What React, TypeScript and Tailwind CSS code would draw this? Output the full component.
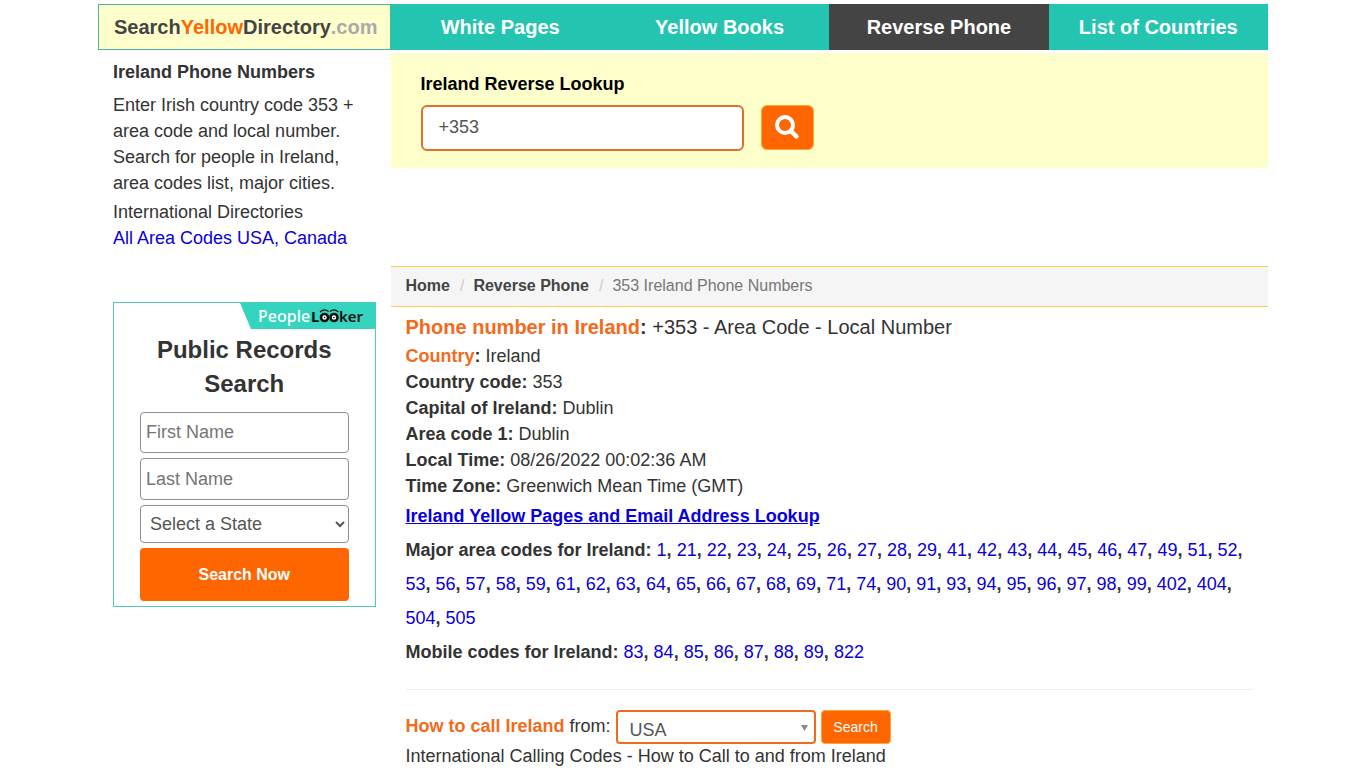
import React, { useState } from 'react';

const navItems = [
  { label: 'White Pages', active: false },
  { label: 'Yellow Books', active: false },
  { label: 'Reverse Phone', active: true },
  { label: 'List of Countries', active: false },
];

const areaCodes = [
  '1', '21', '22', '23', '24', '25', '26', '27', '28', '29', '41', '42', '43', '44', '45', '46', '47', '49',
  '51', '52', '53', '56', '57', '58', '59', '61', '62', '63', '64', '65', '66', '67', '68', '69', '71', '74',
  '90', '91', '93', '94', '95', '96', '97', '98', '99', '402', '404', '504', '505',
];

const mobileCodes = ['83', '84', '85', '86', '87', '88', '89', '822'];

const facts = [
  { label: 'Country code:', value: '353' },
  { label: 'Capital of Ireland:', value: 'Dublin' },
  { label: 'Area code 1:', value: 'Dublin' },
  { label: 'Local Time:', value: '08/26/2022 00:02:36 AM' },
  { label: 'Time Zone:', value: 'Greenwich Mean Time (GMT)' },
];

const CodeList: React.FC<{ title: string; codes: string[] }> = ({ title, codes }) => (
  <p className="leading-[34px] font-bold">
    {title}{' '}
    {codes.map((code, i) => (
      <React.Fragment key={code}>
        <a href="#" className="font-normal text-[#0a00dc]">{code}</a>
        {i < codes.length - 1 && ', '}
      </React.Fragment>
    ))}
  </p>
);

const PeopleLookerLogo = () => (
  <svg width="135" height="26" viewBox="0 0 135 26" role="img" aria-label="PeopleLooker">
    <path d="M0 0H135V26H11Z" fill="#35d4be" />
    <g fontFamily="'Noto Sans', sans-serif" fontSize="16">
      <text x="18" y="19" fill="#fff" fontWeight="500">People</text>
      <text x="71" y="19" fill="#111" fontWeight="700" fontSize="15">L</text>
      <text x="99" y="19" fill="#111" fontWeight="600" fontSize="15">ker</text>
    </g>
    <g fill="#fff" stroke="#111" strokeWidth="2.6">
      <circle cx="84.5" cy="14.5" r="3.5" />
      <circle cx="94" cy="14.5" r="3.5" />
    </g>
    <circle cx="84.5" cy="14.5" r="0.8" fill="#111" />
    <circle cx="94" cy="14.5" r="0.8" fill="#111" />
    <path d="M80 9Q84.5 5 88.5 8.5M90 8.5Q94 5 98.5 9" fill="none" stroke="#111" strokeWidth="1.2" />
  </svg>
);

const Sidebar = () => (
  <aside className="w-1/4 shrink-0 px-[15px] pt-[9px] leading-[26px]">
    <h2 className="font-bold">Ireland Phone Numbers</h2>
    <p className="mt-[7px]">
      Enter Irish country code 353 + area code and local number. Search for people in Ireland, area codes list, major cities.
    </p>
    <p className="mt-[3px]">
      International Directories
      <br />
      <a href="#" className="text-[#0a00dc]">All Area Codes USA, Canada</a>
    </p>

    <form onSubmit={(e) => e.preventDefault()} className="mt-[51px] border border-[#55c9b5] pb-[5px]">
      <div className="flex h-[26px] justify-end">
        <PeopleLookerLogo />
      </div>
      <h3 className="mt-1 text-center text-2xl leading-[34px] font-bold">
        Public Records
        <br />
        Search
      </h3>
      <div className="mt-[11px] flex flex-col gap-[5px] px-[26px]">
        <input
          type="text"
          aria-label="First Name"
          placeholder="First Name"
          className="h-[41px] w-full rounded border border-[#8f8f8f] px-[5px] placeholder-[#757575]"
        />
        <input
          type="text"
          aria-label="Last Name"
          placeholder="Last Name"
          className="h-[42px] w-full rounded border border-[#8f8f8f] px-[5px] placeholder-[#757575]"
        />
        <select aria-label="State" className="h-[38px] w-full rounded border border-[#8f8f8f] bg-white px-[5px] text-[#555]">
          <option>Select a State</option>
        </select>
        <button type="submit" className="h-[53px] w-full rounded bg-[#ff6600] text-base font-bold text-white">
          Search Now
        </button>
      </div>
    </form>
  </aside>
);

const App: React.FC = () => {
  const [phone, setPhone] = useState('+353');

  return (
    <div className="mx-auto max-w-[1170px] pt-1 font-['Liberation_Sans',Arial,sans-serif] text-lg text-[#333]">
      {/* Top bar */}
      <header className="flex h-[46px] bg-[#23c4b0] text-xl font-bold">
        <a href="#" className="flex w-1/4 shrink-0 items-center border border-[#4cb794] bg-[#ffffcc] pl-[15px] text-[#444]">
          Search<span className="text-[#ff6600]">Yellow</span>Directory<span className="text-[#aaa]">.com</span>
        </a>
        <nav className="flex flex-1">
          {navItems.map((item) => (
            <a
              key={item.label}
              href="#"
              className={`flex flex-1 items-center justify-center text-white ${item.active ? 'bg-[#444]' : ''}`}
            >
              {item.label}
            </a>
          ))}
        </nav>
      </header>

      <div className="flex">
        <Sidebar />

        <main className="min-w-0 flex-1 pt-[3px]">
          {/* Reverse lookup */}
          <form onSubmit={(e) => e.preventDefault()} className="bg-[#ffffcc] px-[30px] pt-[18px] pb-[17px]">
            <label htmlFor="phone" className="block leading-[26px] font-bold text-black">Ireland Reverse Lookup</label>
            <div className="mt-2 flex gap-[17px]">
              <input
                id="phone"
                type="text"
                value={phone}
                onChange={(e) => setPhone(e.target.value)}
                className="h-[46px] w-[323px] rounded-md border-2 border-[#e2702a] bg-white px-4 pb-[2px] text-[#555]"
              />
              <button
                type="submit"
                aria-label="Search"
                className="flex h-[45px] w-[53px] items-center justify-center rounded-md border border-[#ffa733] bg-[#ff6600]"
              >
                <svg width="26" height="26" viewBox="0 0 26 26" fill="none" stroke="#fff" aria-hidden="true">
                  <circle cx="11" cy="10" r="8" strokeWidth="4" />
                  <path d="M17 16L22.5 21.5" strokeWidth="4.5" strokeLinecap="round" />
                </svg>
              </button>
            </div>
          </form>

          {/* Breadcrumb */}
          <nav aria-label="Breadcrumb" className="mt-[98px] border-y border-[#f5cf4d] bg-[#f5f5f5] px-[15px] pt-[7px] pb-[9px]">
            <ol className="flex text-base leading-[23px]">
              <li><a href="#" className="font-bold text-[#444]">Home</a></li>
              <li className="pr-[9px] pl-[10px] text-[#ccc]">/</li>
              <li><a href="#" className="font-bold text-[#444]">Reverse Phone</a></li>
              <li className="pr-[9px] pl-[10px] text-[#ccc]">/</li>
              <li className="text-[#777]">353 Ireland Phone Numbers</li>
            </ol>
          </nav>

          {/* Country details */}
          <section className="px-[15px] pt-[7px] leading-[26px]">
            <h1 className="text-xl leading-[26px]">
              <strong><span className="text-[#f26a1b]">Phone number in Ireland</span>:</strong> +353 - Area Code - Local Number
            </h1>
            <p className="mt-[3px]">
              <strong><span className="text-[#f26a1b]">Country</span>:</strong> Ireland
            </p>
            {facts.map((fact) => (
              <p key={fact.label}>
                <strong>{fact.label}</strong> {fact.value}
              </p>
            ))}
            <p className="mt-1">
              <a href="#" className="font-bold text-[#0a00dc] underline">Ireland Yellow Pages and Email Address Lookup</a>
            </p>
            <div className="mt-1">
              <CodeList title="Major area codes for Ireland:" codes={areaCodes} />
              <CodeList title="Mobile codes for Ireland:" codes={mobileCodes} />
            </div>

            <hr className="mt-5 border-[#eee]" />

            <form onSubmit={(e) => e.preventDefault()} className="mt-5 flex gap-[5px]">
              <label htmlFor="from" className="leading-[32px]">
                <strong className="text-[#f26a1b]">How to call Ireland</strong> from:
              </label>
              <div className="relative">
                <select
                  id="from"
                  className="h-[34px] w-[200px] appearance-none rounded border-2 border-[#ee6c1c] bg-white pt-[5px] pl-3 text-[#555]"
                >
                  <option>USA</option>
                </select>
                <svg width="7" height="6" viewBox="0 0 7 6" className="pointer-events-none absolute top-[15px] right-2" aria-hidden="true">
                  <path d="M0 0H7L3.5 6Z" fill="#888" />
                </svg>
              </div>
              <button type="submit" className="h-[34px] w-[70px] rounded border border-[#ffa733] bg-[#ff6600] text-sm text-white">
                Search
              </button>
            </form>
            <p className="-mt-px">International Calling Codes - How to Call to and from Ireland</p>
          </section>
        </main>
      </div>
    </div>
  );
};

export default App;
